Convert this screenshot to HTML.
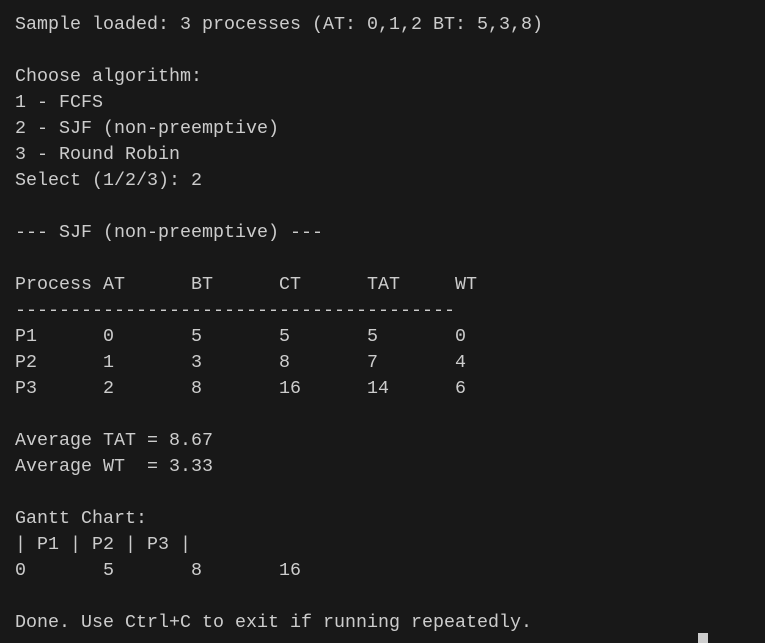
<!DOCTYPE html>
<html><head><style>
html,body{margin:0;padding:0;background:#181818;width:765px;height:642px;overflow:hidden}
pre{margin:0;position:absolute;left:15px;top:12px;font-family:"Liberation Mono",monospace;font-size:18.33px;line-height:26px;color:#cccccc;letter-spacing:0}
.cur{position:absolute;left:698px;top:633px;width:10px;height:10px;background:#cccccc}
</style></head><body>
<pre>Sample loaded: 3 processes (AT: 0,1,2 BT: 5,3,8)

Choose algorithm:
1 - FCFS
2 - SJF (non-preemptive)
3 - Round Robin
Select (1/2/3): 2

--- SJF (non-preemptive) ---

Process AT      BT      CT      TAT     WT
----------------------------------------
P1      0       5       5       5       0
P2      1       3       8       7       4
P3      2       8       16      14      6

Average TAT = 8.67
Average WT  = 3.33

Gantt Chart:
| P1 | P2 | P3 |
0       5       8       16

Done. Use Ctrl+C to exit if running repeatedly.</pre>
<div class="cur"></div>
</body></html>
